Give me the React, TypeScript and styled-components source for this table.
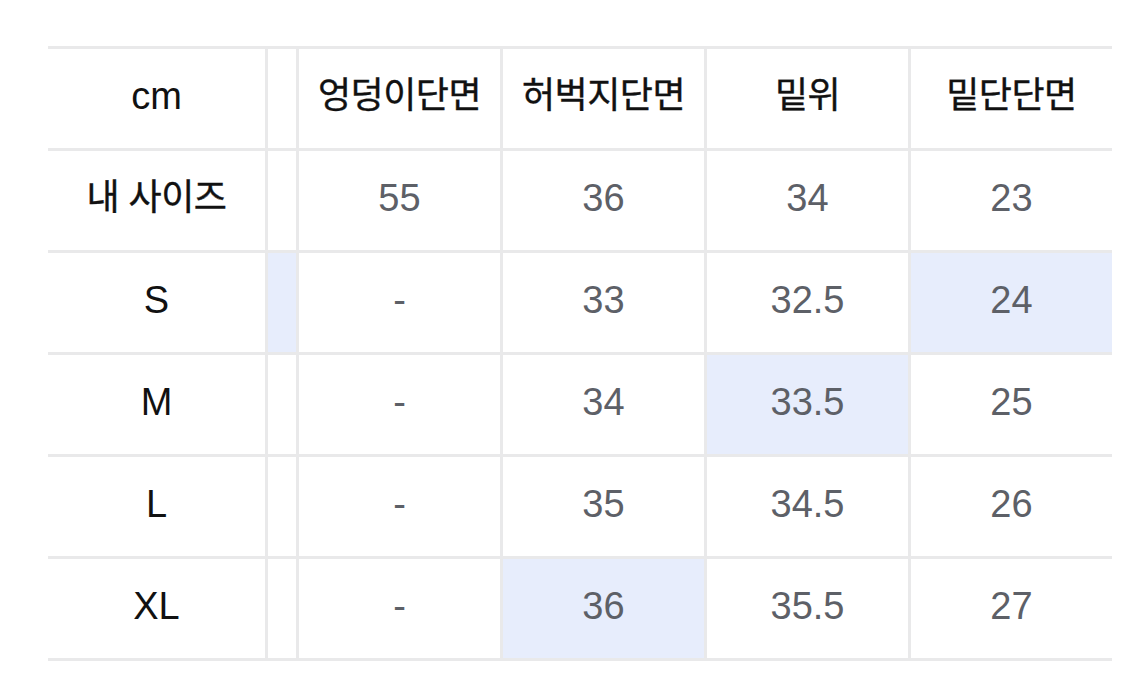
import React from "react";
import styled, { createGlobalStyle } from "styled-components";

const GlobalStyle = createGlobalStyle`
  html, body {
    margin: 0;
    padding: 0;
    background: #ffffff;
  }
  body {
    font-family: "Liberation Sans", "Noto Sans CJK KR", Arial, sans-serif;
  }
`;

const line = "#e9e9ea";
const highlight = "#e7edfc";

const Page = styled.div`
  padding: 46px 13px 0 48px;
`;

const Table = styled.div`
  display: grid;
  grid-template-columns: 217px 31px repeat(4, 204px);
  grid-auto-rows: 102px;
  border-bottom: 3px solid ${line};
  width: 1064px;
`;

const Cell = styled.div<{ $head?: boolean; $label?: boolean; $ko?: boolean; $hl?: boolean; $first?: boolean }>`
  display: flex;
  align-items: center;
  justify-content: center;
  box-sizing: border-box;
  border-top: 3px solid ${line};
  border-left: ${({ $first }) => ($first ? "none" : `3px solid ${line}`)};
  background: ${({ $hl }) => ($hl ? highlight : "#ffffff")};
  color: ${({ $head, $label }) => ($head || $label ? "#111111" : "#5d6067")};
  font-size: ${({ $ko }) => ($ko ? "36px" : "38px")};
  letter-spacing: ${({ $ko }) => ($ko ? "-0.5px" : "0")};
  -webkit-text-stroke: ${({ $ko }) => ($ko ? "0.4px currentColor" : "0")};
  line-height: 1;
  padding-bottom: 5px;
  white-space: nowrap;
`;

const Spacer = styled(Cell)`
  padding: 0;
`;

const headers = ["엉덩이단면", "허벅지단면", "밑위", "밑단단면"];

type Row = { label: string; values: string[]; hl: number[]; spacerHl?: boolean };

const rows: Row[] = [
  { label: "내 사이즈", values: ["55", "36", "34", "23"], hl: [] },
  { label: "S", values: ["-", "33", "32.5", "24"], hl: [3], spacerHl: true },
  { label: "M", values: ["-", "34", "33.5", "25"], hl: [2] },
  { label: "L", values: ["-", "35", "34.5", "26"], hl: [] },
  { label: "XL", values: ["-", "36", "35.5", "27"], hl: [1] },
];

const isKorean = (s: string) => /[\uac00-\ud7a3]/.test(s);

export default function App() {
  return (
    <>
      <GlobalStyle />
      <Page>
        <Table>
          <Cell $first $head>cm</Cell>
          <Spacer />
          {headers.map((h) => (
            <Cell key={h} $head $ko>
              {h}
            </Cell>
          ))}
          {rows.map((r) => (
            <React.Fragment key={r.label}>
              <Cell $first $label $ko={isKorean(r.label)}>
                {r.label}
              </Cell>
              <Spacer $hl={r.spacerHl} />
              {r.values.map((v, i) => (
                <Cell key={i} $hl={r.hl.includes(i)}>
                  {v}
                </Cell>
              ))}
            </React.Fragment>
          ))}
        </Table>
      </Page>
    </>
  );
}
